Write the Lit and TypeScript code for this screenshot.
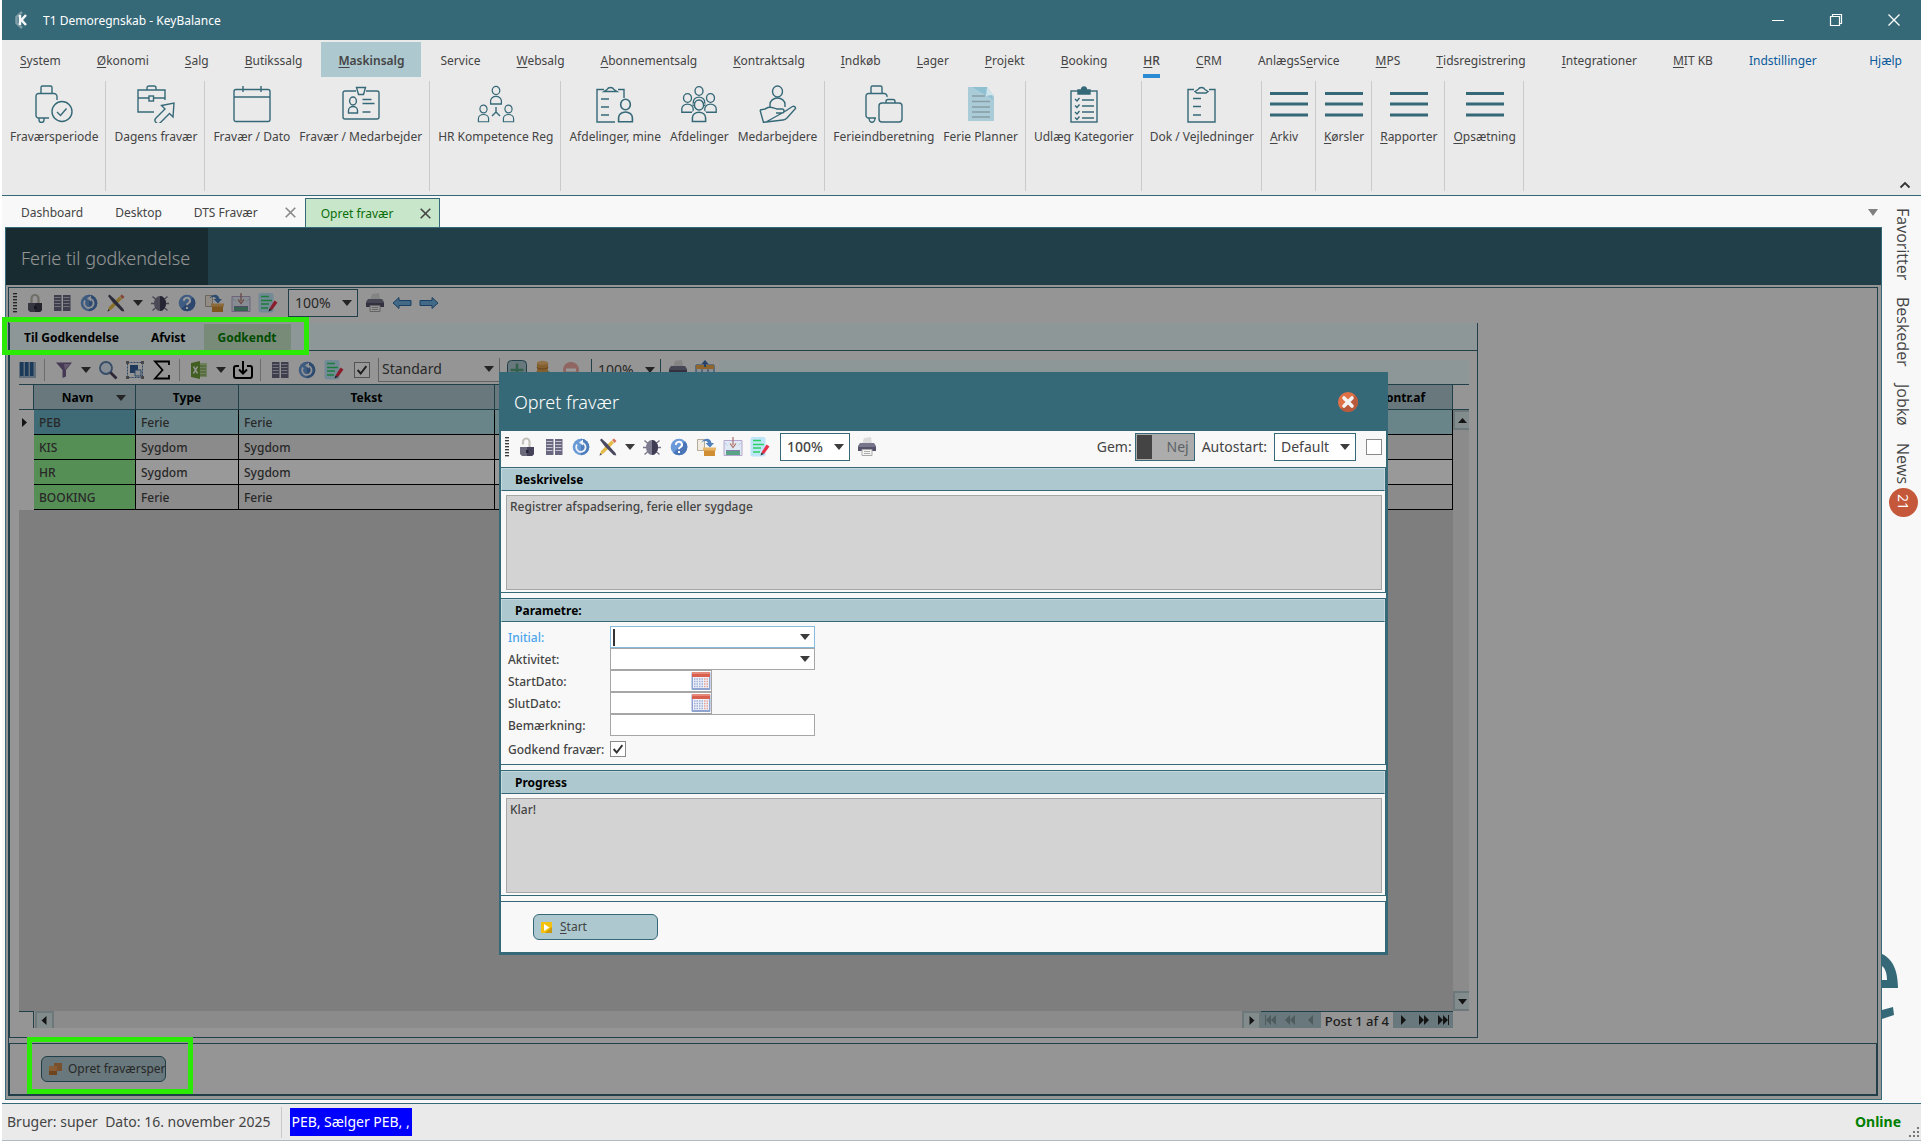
import { LitElement, html, svg, css, nothing, TemplateResult } from "lit";
import { customElement } from "lit/decorators.js";
import { classMap } from "lit/directives/class-map.js";

/** Renders a label in which the letter after "_" is the underlined access key. */
function mnemonic(text: string): TemplateResult {
  const at = text.indexOf("_");
  if (at < 0) return html`${text}`;
  return html`${text.slice(0, at)}<u>${text[at + 1]}</u>${text.slice(at + 2)}`;
}

/* ---------- ribbon icons, drawn on a 38 x 38 grid ---------- */

const person = (x: number, y: number, s = 1) => svg`
  <g transform="translate(${x} ${y}) scale(${s})">
    <ellipse cx="0" cy="0" rx="4.2" ry="4.6"></ellipse>
    <path d="M-6 15v-3.5a6 5 0 0 1 12 0V15z"></path>
  </g>`;

const ribbonIcons: Record<string, TemplateResult> = {
  period: svg`
    <path d="M6 8V2.5A1.500 1.500 0 0 1 7.500 1h8A1.500 1.500 0 0 1 17 2.500V8"></path>
    <path d="M14 33H3.500A2.500 2.500 0 0 1 1 30.500V11a2.500 2.500 0 0 1 2.500-2.500h15A3 3 0 0 1 22 11.500V15"></path>
    <path d="M4 33v2a2 2 0 0 0 5 0v-2"></path>
    <circle cx="27" cy="26.500" r="10"></circle><path d="M22 27l3.500 3.500 6-7"></path>`,
  today: svg`
    <path d="M10 5V3a2 2 0 0 1 2-2h5a2 2 0 0 1 2 2v2M17 27H1V5h27v10"></path>
    <path d="M1 13h11M17 13h11"></path><rect x="12" y="11" width="4.500" height="5"></rect>
    <path d="M37 18l-1 14-3.500-3.500-9 9a3 3 0 0 1-4.500-4.500l9-9L24.500 20.500z"></path>`,
  calendar: svg`
    <rect x="1" y="4.500" width="36" height="32" rx="2"></rect>
    <path d="M1 12h36M10 1v6M28 1v6"></path>`,
  badge: svg`
    <path d="M14 6H3a2 2 0 0 0-2 2v24a2 2 0 0 0 2 2h32a2 2 0 0 0 2-2V8a2 2 0 0 0-2-2H24"></path>
    <path d="M14.500 2.500h9l-2 7h-5z"></path><ellipse cx="11" cy="16" rx="3.400" ry="4"></ellipse>
    <path d="M6.500 28v-2.500a4.500 4 0 0 1 9 0V28zM20.500 14.500h9M20.500 18.500h12M20.500 27h8"></path>`,
  competence: svg`
    ${person(19, 5.5, 0.9)}${person(6.5, 24, 0.85)}${person(31.5, 24, 0.85)}
    <path d="M19 22v5l-4 4M19 27l4 4"></path>`,
  clipPerson: svg`
    <path d="M8 4.500H1V37h18M22 4.500h6V13"></path>
    <path d="M8 6.500l3-2a4 4 0 0 1 7 0l3 2zM5 14h8M5 22h8M5 30h8"></path>${person(29.5, 19.5, 1.15)}`,
  group: svg`
    ${person(19, 6, 0.95)}${person(7.5, 13, 0.95)}${person(30.5, 13, 0.95)}
    <path class="knock" d="M12 38V27l4-3-3-5 6-6 6 6-3 5 4 3v11z"></path>${person(19, 20, 1.1)}`,
  hand: svg`
    <ellipse cx="18.500" cy="6.500" rx="5" ry="5.500"></ellipse><path d="M11 22v-2.500a7.500 6.500 0 0 1 15 0V22"></path>
    <path d="M1 25l5-1 3-1.500c4-1 6 1 9 1.500h5a2 2 0 0 1 0 4h-6M25 27l8.500-5.500a2 2 0 0 1 3 2L28 33a6 6 0 0 1-4 2L7 37zM1 25l3.500 12.500L9 36.500"></path>`,
  luggage: svg`
    <path d="M6 8V2.500A1.500 1.500 0 0 1 7.500 1h8A1.500 1.500 0 0 1 17 2.500V8"></path>
    <path d="M11 33H3.500A2.500 2.500 0 0 1 1 30.500V11a2.500 2.500 0 0 1 2.500-2.500h15A3 3 0 0 1 22 12M4 33a2.500 3.500 0 0 0 6 0"></path>
    <rect x="14" y="18" width="23" height="19" rx="3"></rect><path d="M21 18v-1.500a2 2 0 0 1 2-2h5a2 2 0 0 1 2 2V18"></path>`,
  planner: svg`
    <path d="M6 2h19l7 9v25H6z" fill="#a9ccd8" stroke="none"></path>
    <path d="M10 2h15l7 13z" fill="#8fc0d1" stroke="none"></path><path d="M25 2l7 9-3-1-5 1z" fill="#cfe3ea" stroke="none"></path>
    <path d="M10 11h13M10 16.500h18M10 22h18M10 27h18M10 32h18" stroke="#8a9ca4"></path>`,
  checklist: svg`
    <rect x="6" y="6" width="26" height="31"></rect><path d="M13 5h3.500a2.500 3 0 0 1 5 0H25v4H13z" fill="#366978"></path>
    <path d="M10 14l2 2 2.500-3M10 20.500l2 2 2.500-3M10 27l2 2 2.500-3M10 32.500l2 2 2.500-3M17 15h12M17 21h12M17 27h12M17 33h12"></path>`,
  clipboard: svg`
    <path d="M11 4.500H5V37h27V4.500h-6"></path><path d="M12 6.500l3-2a4 4 0 0 1 7 0l3 2-2 1.500h-9zM10 13.500h8M10 21.500h8M10 30h8"></path>`,
  lines: svg`<path d="M0 8.500h38M0 19h38M0 30h38" stroke-width="3.200"></path>`,
};

interface RibbonItem { icon: string; label: string; start?: boolean; }
const ribbon: RibbonItem[][] = [
  [{ icon: "period", label: "Fraværsperiode" }],
  [{ icon: "today", label: "Dagens fravær" }],
  [{ icon: "calendar", label: "Fravær / Dato" }, { icon: "badge", label: "Fravær / Medarbejder" }],
  [{ icon: "competence", label: "HR Kompetence Reg" }],
  [{ icon: "clipPerson", label: "Afdelinger, mine" }, { icon: "group", label: "Afdelinger" }, { icon: "hand", label: "Medarbejdere" }],
  [{ icon: "luggage", label: "Ferieindberetning" }, { icon: "planner", label: "Ferie Planner" }],
  [{ icon: "checklist", label: "Udlæg Kategorier" }],
  [{ icon: "clipboard", label: "Dok / Vejledninger" }],
  [{ icon: "lines", label: "_Arkiv", start: true }],
  [{ icon: "lines", label: "_Kørsler" }],
  [{ icon: "lines", label: "_Rapporter" }],
  [{ icon: "lines", label: "_Opsætning" }],
];

const menu = ["_System", "_Økonomi", "_Salg", "_Butikssalg", "_Maskinsalg", "Service", "_Websalg", "_Abonnementsalg",
  "_Kontraktsalg", "_Indkøb", "_Lager", "_Projekt", "_Booking", "_HR", "_CRM", "AnlægsS_ervice", "_MPS",
  "_Tidsregistrering", "_Integrationer", "_MIT KB", "Indstillinger", "Hjælp"];

/* ---------- toolbar icons, drawn on a 20 x 20 grid ---------- */

const toolIcons: Record<string, TemplateResult> = {
  lock: svg`<path d="M6.500 10V5.500a3.500 3.500 0 0 1 7 0V10" fill="none" stroke="#b9b7b0" stroke-width="2.200"></path>
    <path d="M3 10h14v7l-2 2H5l-2-2z" fill="#5b5a6d"></path><path d="M10 10h7v7l-2 2h-5z" fill="#3d3c4f"></path><path d="M9 13h2.500v3H9z" fill="#25243a"></path>`,
  unlock: svg`<path d="M6 7.500V5a3.200 3.200 0 0 1 6.500-.5V10" fill="none" stroke="#c4c2ba" stroke-width="2.200"></path>
    <path d="M3 10h14v7l-2 2H5l-2-2z" fill="#6b6a7d"></path><path d="M10 10h7v7l-2 2h-5z" fill="#45445a"></path><path d="M9 13h2.500v3H9z" fill="#25243a"></path>`,
  columns: svg`<path d="M2 2h7.500v16H2zM11 2h7.500v16H11z" fill="#6a6880"></path>
    <path d="M2.500 4.500h6M2.500 7.500h6M2.500 10.500h6M2.500 13.500h6M11.500 4.500h6M11.500 7.500h6M11.500 10.500h6M11.500 13.500h6" stroke="#c4c2d0" stroke-width="1"></path>`,
  refresh: svg`<circle cx="10" cy="10" r="8.300" fill="#6a9ad6"></circle><path d="M10 1.700a8.300 8.300 0 0 1 0 16.600z" fill="#4f7cba"></path>
    <path d="M6 7.500a4.700 4.700 0 1 0 6-1.500" fill="none" stroke="#eef3fa" stroke-width="1.800"></path><path d="M12 2.500v6L8 5.500z" fill="#eef3fa"></path>`,
  tools: svg`<path d="M2 17.500l1-3.500L13.500 3.500l2.500 2.500L5.500 16.500z" fill="#e3bb4a"></path><path d="M14 3l2-1.500 2.500 2.500-2 2z" fill="#d9745b"></path><path d="M1.500 18.500l.7-2.500 1.800 1.700z" fill="#555"></path>
    <path d="M2 3l1.500-1.500L9 6.500 17.500 16l.8 2.500-2.800-.5L6.500 9z" fill="#4a4960"></path>`,
  bug: svg`<path d="M2.500 3.500l4 3.500M17.500 3.500l-4 3.500M1 10.500h18M2.500 17.500l4-3.500M17.500 17.500l-4-3.500" stroke="#77758a" stroke-width="1.300"></path>
    <ellipse cx="10" cy="10.500" rx="6" ry="7.500" fill="#7d7b90"></ellipse><path d="M10 3a6 7.500 0 0 1 0 15z" fill="#3e3c55"></path>`,
  help: svg`<circle cx="10" cy="10" r="8.300" fill="#6a9ad9"></circle><path d="M16 4.200a8.300 8.300 0 0 1-11.800 11.700z" fill="#4a76b8"></path>
    <path d="M7 7.800a3 2.800 0 1 1 4.500 2.200c-1 .6-1.500 1-1.500 2.200M10 14v2" fill="none" stroke="#fff" stroke-width="2"></path>`,
  box: svg`<path d="M1.500 2.500h7v11h-7z" fill="#f2ece0" stroke="#b3ab9a"></path><path d="M5.500 5.500C8 .5 14.500.500 15.500 6H18l-4 4.500L9.500 6H12c-1-2.500-4-2.500-6.500-.5z" fill="#4f7fbd"></path>
    <path d="M8 13h11v6H8z" fill="#d18f35"></path><path d="M7 10.500h13v3H7z" fill="#e9b566"></path>`,
  import: svg`<path d="M1 3.500h18v15H1z" fill="#dfe9f4" stroke="#b7a6cf"></path><path d="M2 6l3 3M18 6l-3 3" stroke="#9fb9dc" stroke-dasharray="1 1"></path>
    <path d="M3 14h14v4H3z" fill="#5aa486"></path><path d="M3 13.500h14" stroke="#8a7bb0"></path><path d="M10 0v8M7 6.500l3 4 3-4" fill="#f0d9d6" stroke="#a9706c" stroke-width="1.200"></path>`,
  edit: svg`<rect x=".5" y="0" width="15" height="19.500" rx="2" fill="#bfe6fa"></rect><path d="M3 3.500h8M3 7.500h11M3 11h8M3 15h7" stroke="#2ed062" stroke-width="1.700"></path>
    <path d="M11.500 15.500l5-8 3 2-5.500 7.500z" fill="#e8304a"></path><path d="M11.500 15.500l2.500 1.500-3.500 1.500z" fill="#333"></path>`,
  printer: svg`<path d="M7 1l7-1 1 7H5z" fill="#dcdcdc"></path><path d="M3 6h14l2 3v5H1V9z" fill="#77758c"></path><path d="M1 10h18v4H1z" fill="#55536a"></path>
    <path d="M5 12.500h10v6H5z" fill="#f4f4f4" stroke="#a9a9a9"></path><path d="M7 14.500h6M7 16.500h6" stroke="#9a9a9a" stroke-width=".8"></path>`,
  back: svg`<path d="M1 10l6-5.500v3h12v5H7v3z" fill="#6fb0e0" stroke="#2f6ba5"></path>`,
  forward: svg`<path d="M19 10l-6-5.500v3H1v5h12v3z" fill="#6fb0e0" stroke="#2f6ba5"></path>`,
  bars: svg`<path d="M2 2h17v16H2z" fill="#9fb7cc"></path><path d="M3 2h3.500v14H3zM8 2h3.500v14H8zM13 2h3.500v14H13z" fill="#2e5f94"></path>`,
  funnel: svg`<path d="M2 2.500h16L12 10v6.500L8.500 18v-8z" fill="#74618f"></path><path d="M10 4h6l-5 6z" fill="#a594b8"></path>`,
  search: svg`<circle cx="8" cy="8" r="6" fill="#dfeaf5" stroke="#5a7fae" stroke-width="1.800"></circle><path d="M12.500 12.500l6 6" stroke="#4c4358" stroke-width="2.800"></path>`,
  select: svg`<path d="M2.500 2.500h15v15h-15z" fill="none" stroke="#4a76a8" stroke-dasharray="2 1"></path><path d="M5 5h8v8H5z" fill="#345f9a"></path>
    <path d="M10 10h6v6h-6z" fill="#e8edf5" stroke="#4a76a8"></path><path d="M1 1h3v3H1zM16 1h3v3h-3zM1 16h3v3H1zM16 16h3v3h-3z" fill="#777"></path>`,
  sigma: svg`<path d="M17 5V1.500H3l7.500 8.500L3 18.500h14V15" fill="none" stroke="#000" stroke-width="1.800"></path>`,
  excel: svg`<path d="M9 3h9v14H9z" fill="#b9d59a"></path><path d="M11 6h6M11 9h6M11 12h6M11 15h6" stroke="#6e9c44"></path><path d="M2 3l9-2v18l-9-2z" fill="#6f9f3a"></path>
    <path d="M4.500 6.500l4 7M8.500 6.500l-4 7" stroke="#fff" stroke-width="1.500"></path>`,
  download: svg`<path d="M6 6H3a2 2 0 0 0-2 2v8a2 2 0 0 0 2 2h14a2 2 0 0 0 2-2V8a2 2 0 0 0-2-2h-3M10 1v12M6 9.500l4 4 4-4" fill="none" stroke="#000" stroke-width="2"></path>`,
  plus: svg`<rect x=".5" y=".5" width="19" height="19" rx="4" fill="#adc9cf" stroke="#366978"></rect><path d="M10 3.500v13M3.500 10h13" stroke="#57a27e" stroke-width="2.500"></path>`,
  data: svg`<path d="M3 2.500h11v14H3z" fill="#dda052"></path><ellipse cx="8.500" cy="2.800" rx="5.500" ry="2" fill="#f3bd78"></ellipse>
    <path d="M3 7a5.500 2 0 0 0 11 0M3 11.500a5.500 2 0 0 0 11 0" fill="none" stroke="#a86c2a"></path><path d="M11 13c2-2 5-2 7 0l-2 4h-4z" fill="#7db08b"></path>`,
  minus: svg`<circle cx="10" cy="10" r="8" fill="#f0aaa4"></circle><path d="M5 8.500h10v3H5z" fill="#fff"></path>`,
  sheet: svg`<path d="M1 5h18v13H1z" fill="#e6eef8" stroke="#3f6fae"></path><path d="M1 5h18v4H1z" fill="#efa94a"></path><path d="M7 9v9M13 9v9M1 13h18" stroke="#3f6fae"></path><path d="M10 0l3.500 4H11v3H9V4H6.500z" fill="#3f6fae"></path>`,
};

const icon = (name: string) => html`<svg class="tool" viewBox="0 0 20 20" aria-hidden="true">${toolIcons[name]}</svg>`;
const caret = html`<svg class="caret" viewBox="0 0 10 6" aria-hidden="true"><path d="M0 0h10L5 6z" fill="#3c3c3c"></path></svg>`;
const tick = html`<svg class="tick" viewBox="0 0 16 16" aria-hidden="true"><path d="M3 8l3.500 4L13 3.500" fill="none" stroke="#333" stroke-width="2.200"></path></svg>`;

const shared = css`
  *, *::before, *::after { box-sizing: border-box; }
  button, input, select, textarea { font: inherit; color: inherit; margin: 0; padding: 0; border: 0; background: none; border-radius: 0; outline: none; }
  button { display: inline-flex; align-items: center; justify-content: center; }
  svg { display: block; flex: none; }
  u { text-underline-offset: 2px; }
  .tool { width: 20px; height: 20px; }
  .caret { width: 10px; height: 6px; }
  .combo { display: grid; align-items: center; height: 28px; border: 1px solid #366978; background: #fff; font-size: 14px; color: #444; }
  .combo > * { grid-area: 1 / 1; }
  .combo select { appearance: none; width: 100%; height: 100%; padding-left: 6px; }
  .combo .caret { justify-self: end; margin-right: 5px; pointer-events: none; }
  .check { display: grid; width: 16px; height: 16px; border: 1px solid #8a8a8a; background: #fff; }
  .check > * { grid-area: 1 / 1; }
  .check input { appearance: none; width: 14px; height: 14px; }
  .check .tick { width: 14px; height: 14px; pointer-events: none; }
`;

/** The row of general tools that every form window carries. */
@customElement("form-tools")
class FormTools extends LitElement {
  static properties = { dialog: { type: Boolean } };
  declare dialog: boolean;
  static styles = [shared, css`
    :host { display: flex; align-items: center; gap: 7px; }
    .grip { width: 4px; height: 20px; margin-right: 1px; background: repeating-linear-gradient(#3c3c3c 0 1px, #b4b4b4 1px 2px, transparent 2px 3px); }
    .zoom { width: 70px; margin-left: 3px; }
  `];
  render() {
    const names = [this.dialog ? "unlock" : "lock", "columns", "refresh", "tools", "caret", "bug", "help", "box", "import", "edit"];
    return html`
      <span class="grip"></span>
      ${names.map((n) => html`<button type="button" aria-label=${n}>${n === "caret" ? caret : icon(n)}</button>`)}
      <span class="combo zoom"><select aria-label="Zoom"><option>100%</option></select>${caret}</span>
      <button type="button" aria-label="print">${icon("printer")}</button>
      ${this.dialog ? nothing : html`<button type="button" aria-label="back">${icon("back")}</button>
        <button type="button" aria-label="forward">${icon("forward")}</button>`}`;
  }
}

/** The dialog in which an absence is registered. */
@customElement("absence-dialog")
class AbsenceDialog extends LitElement {
  static styles = [shared, css`
    :host { display: flex; flex-direction: column; background: #f8f8f8; border: solid #366978; border-width: 0 2px 3px; font-size: 12px; font-weight: 500; color: #444; }
    header { display: flex; align-items: center; justify-content: space-between; height: 59px; padding: 0 28px 0 13px; background: #366978; color: #fff; }
    h2 { margin: 0; font-size: 18px; font-weight: 300; }
    .close svg { width: 20px; height: 20px; }
    .bar { display: flex; justify-content: space-between; align-items: flex-start; height: 36px; padding: 1px 4px 0; }
    .bar form-tools { height: 30px; }
    .options { display: flex; align-items: center; height: 30px; gap: 7px; font-size: 14px; font-weight: 400; }
    .toggle { width: 60px; height: 28px; margin-left: -4px; padding: 0 5px 0 1px; border: 1px solid #366978; background: #acacac; color: #5c6266; justify-content: space-between; }
    .toggle i { width: 15px; height: 24px; background: #444; }
    .auto { width: 82px; }
    .options .check { margin-left: 3px; }
    section { border: solid #366978; border-width: 1px 1px 1px 0; margin-bottom: 5px; }
    section:last-child { margin-bottom: 0; border-bottom: 0; }
    h3 { margin: 0; height: 23px; line-height: 21px; padding-left: 13px; border: 1px solid #c4d9dd; border-bottom-color: #366978; background: #adc9cf; color: #000; font-size: 12px; font-weight: 700; }
    .memo { display: block; width: calc(100% - 8px); height: 95px; margin: 4px 3px 2px 5px; padding: 2px 3px; resize: none; border: 1px solid #a6a6a6; background: #d3d3d3; line-height: 18px; font-weight: 500; }
    .fields { display: grid; grid-template-columns: 102px 205px; justify-content: start; padding: 4px 7px 0; }
    .fields label { line-height: 23px; height: 22px; }
    .fields .active { color: #4aa5ee; }
    .field { display: flex; align-items: center; height: 22px; border: 1px solid #a6a6a6; background: #fff; }
    .field.focus { border-color: #86bbdc; }
    .field.focus::before { content: ""; width: 2px; height: 17px; margin-left: 2px; background: #333; }
    .field input { flex: 1; min-width: 0; height: 100%; padding: 0 3px; }
    .field .caret { margin-right: 4px; }
    .field.date { width: 102px; }
    .field.date svg { width: 20px; height: 20px; }
    .fields .tall { line-height: 28px; height: 28px; }
    .fields .check { margin-top: 5px; }
    .actions { height: 51px; padding: 12px 32px; }
    .start { width: 125px; height: 26px; justify-content: flex-start; gap: 8px; padding-left: 7px; border: 1px solid #366978; border-radius: 6px; background: #adc9cf; font-weight: 400; }
    .start svg { width: 11px; height: 11px; }
  `];
  private calendar = html`<svg viewBox="0 0 20 20" aria-hidden="true"><rect x=".5" y="1" width="19" height="18" rx="1" fill="#8fa3cf"></rect>
    <path d="M1 1h18v5H1z" fill="#d9604e"></path><path d="M1 1h18v2H1z" fill="#e58a7a"></path><path d="M2 6h16v11H2z" fill="#eef1f9"></path>
    <path d="M3 8h10M3 10.500h10M3 13h10M3 15.500h10" stroke="#9daed6" stroke-width="1.500" stroke-dasharray="1.500 1"></path>
    <path d="M13 8h4M13 10.500h4M13 13h4M13 15.500h4" stroke="#e3a297" stroke-width="1.500" stroke-dasharray="1.500 1"></path></svg>`;
  render() {
    return html`
      <header>
        <h2>Opret fravær</h2>
        <button class="close" type="button" aria-label="Luk"><svg viewBox="0 0 20 20"><circle cx="10" cy="10" r="10" fill="#e07046"></circle>
          <path d="M17.100 2.900A10 10 0 0 1 2.900 17.100z" fill="#b95a3c"></path><path d="M6 6l8 8M14 6l-8 8" stroke="#f3f3f3" stroke-width="3.600" stroke-linecap="round"></path></svg></button>
      </header>
      <div class="bar">
        <form-tools dialog></form-tools>
        <div class="options">
          <span id="gem">Gem:</span>
          <button class="toggle" type="button" role="switch" aria-checked="false" aria-labelledby="gem"><i></i>Nej</button>
          <label for="auto">Autostart:</label>
          <span class="combo auto"><select id="auto"><option>Default</option></select>${caret}</span>
          <span class="check"><input type="checkbox" aria-label="Autostart" /></span>
        </div>
      </div>
      <section><h3>Beskrivelse</h3><textarea class="memo" readonly aria-label="Beskrivelse" .value=${"Registrer afspadsering, ferie eller sygdage"}></textarea></section>
      <section>
        <h3>Parametre:</h3>
        <div class="fields">
          <label class="active" for="initial">Initial:</label><span class="field focus"><input id="initial" role="combobox" aria-expanded="false" />${caret}</span>
          <label for="activity">Aktivitet:</label><span class="field"><input id="activity" role="combobox" aria-expanded="false" />${caret}</span>
          <label for="from">StartDato:</label><span class="field date"><input id="from" />${this.calendar}</span>
          <label for="to">SlutDato:</label><span class="field date"><input id="to" />${this.calendar}</span>
          <label for="note">Bemærkning:</label><span class="field"><input id="note" /></span>
          <label class="tall" for="approve">Godkend fravær:</label><span class="check"><input id="approve" type="checkbox" checked />${tick}</span>
        </div>
      </section>
      <section><h3>Progress</h3><textarea class="memo" readonly aria-label="Progress" .value=${"Klar!"}></textarea></section>
      <section class="actions">
        <button class="start" type="button"><svg viewBox="0 0 11 11"><path d="M0 0h11v11H0z" fill="#f4c20d"></path><path d="M11 5v6H4z" fill="#c99a10"></path><path d="M3 2l5.500 3.500L3 9z" fill="#fff"></path></svg><span>${mnemonic("_Start")}</span></button>
      </section>`;
  }
}

interface Row { name: string; kind: string; text: string; }
const rows: Row[] = [
  { name: "PEB", kind: "Ferie", text: "Ferie" },
  { name: "KIS", kind: "Sygdom", text: "Sygdom" },
  { name: "HR", kind: "Sygdom", text: "Sygdom" },
  { name: "BOOKING", kind: "Ferie", text: "Ferie" },
];

/** The grid of approved absences with its scroll bars and record navigator. */
@customElement("absence-grid")
class AbsenceGrid extends LitElement {
  static styles = [shared, css`
    :host { display: grid; grid-template-columns: minmax(0, 1fr) 16px; grid-template-rows: minmax(0, 1fr) 17px; font-size: 12px; font-weight: 500; color: #444; }
    .sheet { background: #d3d3d3; overflow: hidden; }
    table { width: 100%; border-collapse: separate; border-spacing: 0; table-layout: fixed; }
    th, td { height: 25px; padding: 2px 5px 0; text-align: left; border-right: 1px solid #000; border-bottom: 1px solid #000; white-space: nowrap; overflow: hidden; }
    th { height: 26px; border-color: #366978; border-top: 1px solid #366978; background: #adc9cf; color: #000; font-weight: 700; text-align: center; }
    .mark { width: 15px; padding: 0; background: #f8f8f8; border-bottom-color: #f8f8f8; border-right-color: #f8f8f8; }
    th.mark { border-right-color: #366978; border-bottom-color: #366978; }
    .mark svg { width: 5px; height: 9px; margin-left: 3px; }
    .name { width: 102px; }
    .kind { width: 103px; }
    .text { width: 256px; }
    .by { width: 102px; }
    .sort { display: grid; grid-template-columns: 1fr 10px; align-items: center; padding: 0 4px 0 0; }
    td { background: #e8e8e8; }
    tr:nth-child(odd) td { background: #fff; }
    tr:first-child td { background: #b1dee4; }
    tbody td.name { background: #90ee90; }
    tbody tr:first-child td.name { background: #69b2c5; }
    tbody tr td.mark { background: #f8f8f8; }
    .vertical { display: flex; flex-direction: column; background: #e8e8e8; }
    .corner { height: 26px; border-top: 1px solid #366978; border-bottom: 1px solid #366978; background: #f8f8f8; }
    .arrow { width: 16px; height: 20px; border: 2px solid #b4c8cc; border-right: 0; background: #dbe9ec; }
    .vertical .arrow + span { flex: 1; }
    .arrow svg { width: 9px; height: 9px; }
    .horizontal { display: flex; background: #e8e8e8; }
    .horizontal .arrow { width: 19px; height: 17px; margin-left: 1px; border: 2px solid #b4c8cc; border-bottom: 0; }
    .horizontal .start { width: 15px; border: solid #366978; border-width: 1px 1px 0 0; background: #f8f8f8; }
    .track { flex: 1; }
    .records { display: flex; align-items: stretch; border-top: 1px solid #366978; background: #adc9cf; font-size: 13px; }
    .records button { width: 20px; }
    .records svg { width: 13px; height: 10px; }
    .records output { padding: 0 4px; background: #f8f8f8; line-height: 18px; color: #333; height: 16px; }
    .dim { opacity: .3; }
  `];
  private jump(path: string, dim = false, label = "") {
    return html`<button type="button" class=${classMap({ dim })} aria-label=${label}><svg viewBox="0 0 13 10"><path d=${path} fill="#222"></path></svg></button>`;
  }
  render() {
    return html`
      <div class="sheet">
        <table>
          <thead><tr><th class="mark"></th><th class="name"><span class="sort"><span>Navn</span>${caret}</span></th><th class="kind">Type</th><th class="text">Tekst</th><th></th><th class="by">Kontr.af</th></tr></thead>
          <tbody>
            ${rows.map((r, i) => html`<tr>
              <td class="mark">${i ? nothing : html`<svg viewBox="0 0 5 9"><path d="M0 0l5 4.500L0 9z" fill="#222"></path></svg>`}</td>
              <td class="name">${r.name}</td><td>${r.kind}</td><td>${r.text}</td><td></td><td></td></tr>`)}
          </tbody>
        </table>
      </div>
      <div class="vertical">
        <span class="corner"></span>
        <button class="arrow" type="button" aria-label="Op"><svg viewBox="0 0 9 9"><path d="M0 7l4.500-5L9 7z" fill="#222"></path></svg></button>
        <span></span>
        <button class="arrow" type="button" aria-label="Ned"><svg viewBox="0 0 9 9"><path d="M0 2h9L4.500 7.500z" fill="#222"></path></svg></button>
      </div>
      <div class="horizontal">
        <span class="start"></span>
        <button class="arrow" type="button" aria-label="Venstre"><svg viewBox="0 0 9 9"><path d="M6.500 0v9L1.500 4.500z" fill="#222"></path></svg></button>
        <span class="track"></span>
        <button class="arrow" type="button" aria-label="Højre"><svg viewBox="0 0 9 9"><path d="M2.500 0v9l5-4.500z" fill="#222"></path></svg></button>
        <div class="records">
          ${this.jump("M1 0h1v10H1zM7 0v10L2 5zM12 0v10L7 5z", true, "Første")}
          ${this.jump("M6 0v10L1 5zM11 0v10L6 5z", true, "Forrige side")}
          ${this.jump("M9 0v10L4 5z", true, "Forrige")}
          <output>Post 1 af 4</output>
          ${this.jump("M4 0v10l5-5z", false, "Næste")}
          ${this.jump("M2 0v10l5-5zM7 0v10l5-5z", false, "Næste side")}
          ${this.jump("M1 0v10l5-5zM6 0v10l5-5zM11 0h1v10h-1z", false, "Sidste")}
        </div>
      </div>`;
  }
}

@customElement("app-root")
class AppRoot extends LitElement {
  static styles = [shared, css`
    :host { display: flex; flex-direction: column; height: 100vh; padding-left: 2px; overflow: hidden; background: #fff; color: #444; font: 12px/16px "Noto Sans", "Open Sans", sans-serif; }
    .title { display: flex; align-items: center; height: 40px; padding: 0 20px 0 12px; background: #366978; color: #fff; }
    .title h1 { flex: 1; margin: 0 0 0 13px; padding-top: 2px; font-size: 12px; font-weight: 400; }
    .title .logo { width: 16px; height: 18px; }
    .windows { display: flex; gap: 44px; }
    .windows svg { width: 14px; height: 14px; }
    .menu { display: flex; gap: 2px; height: 41px; padding: 2px 2px 4px 1px; background: #eaeaea; }
    .menu a { display: flex; align-items: center; padding: 2px 17px 0; color: #444; text-decoration: none; white-space: nowrap; }
    .menu .marked { background: #adc9cf; font-weight: 600; }
    .menu .current { font-weight: 500; }
    .menu .current span { position: relative; }
    .menu .current span::after { content: ""; position: absolute; left: 0; right: 0; bottom: -9px; height: 4px; background: #2b8ad4; }
    .menu .link { color: #0a5a9c; }
    .menu .link:last-child { margin-left: auto; }
    .ribbon { display: flex; height: 115px; padding-bottom: 4px; border-bottom: 1px solid #366978; background: #eaeaea; }
    .group { display: flex; gap: 9px; padding: 4px 7px 0 8px; border-right: 1px solid #cacaca; }
    .group button { flex-direction: column; justify-content: flex-start; gap: 6px; white-space: nowrap; }
    .group .lead { align-items: flex-start; }
    .group svg { width: 38px; height: 38px; fill: none; stroke: #366978; stroke-width: 1.400; }
    .group .knock { fill: #eaeaea; stroke: none; }
    .fold { align-self: flex-end; margin: 0 10px 2px auto; }
    .fold svg { width: 12px; height: 8px; }
    .work { flex: 1; min-height: 0; display: grid; grid-template-columns: minmax(0, 1fr) 39px; grid-template-rows: 31px minmax(0, 1fr); padding: 0 0 3px 3px; background: #f8f8f8; }
    .tabs { display: flex; align-items: center; padding-top: 2px; }
    .tabs button { height: 29px; padding: 0 16px; }
    .tabs svg { width: 11px; height: 11px; margin-left: 27px; color: #888; }
    .tabs .closable { padding-right: 9px; }
    .tabs .open { height: 30px; margin-bottom: -1px; padding: 0 8px 0 15px; border: 1px solid #366978; border-bottom: 0; background: #c8e6c9; color: #0a6e0a; }
    .tabs .open svg { color: #444; }
    .tabs .more { margin-left: auto; padding: 0 4px 0 0; }
    .tabs .more svg { width: 10px; height: 7px; margin: 0; }
    .side { grid-row: 1 / 3; grid-column: 2; display: flex; flex-direction: column; align-items: center; position: relative; padding: 12px 0 0 3px; overflow: hidden; font-family: "Open Sans", sans-serif; font-size: 16px; line-height: 20px; }
    .side button { writing-mode: vertical-rl; margin-bottom: 17px; }
    .side .last { margin-bottom: 4px; }
    .side .count { writing-mode: vertical-rl; display: grid; place-items: center; width: 29px; height: 29px; border-radius: 50%; background: #c5583a; color: #fff; font-size: 14px; }
    .side .brand { position: absolute; left: 0; bottom: 79px; width: 18px; height: 68px; }
    .pane { position: relative; display: flex; flex-direction: column; border: 1px solid #366978; background: #f8f8f8; min-height: 0; }
    .head { display: flex; height: 57px; background: #366978; }
    .head h2 { display: flex; align-items: center; width: 202px; margin: 0; padding: 2px 0 0 15px; background: #284852; color: #f8f8f8; font-size: 18px; font-weight: 300; white-space: nowrap; }
    .frame { flex: 1; min-height: 0; display: flex; flex-direction: column; margin: 2px 3px 3px 2px; border: solid #366978; border-width: 1px 1px 0 1px; }
    .frame > form-tools { height: 35px; padding: 0 0 5px 4px; }
    .views { position: relative; display: flex; align-items: center; height: 28px; max-width: 1469px; border: solid #366978; border-width: 0 1px 1px; background: #edfcfc; color: #000; font-weight: 700; font-size: 12px; }
    .views button { height: 26px; padding: 2px 18px 0 14px; }
    .views .chosen { padding-right: 14px; background: #c8e6c9; color: #008000; }
    .panel { flex: 1; min-height: 0; display: flex; flex-direction: column; max-width: 1469px; padding: 0 8px 9px 9px; border: solid #366978; border-width: 0 1px 1px; }
    .panel absence-grid { flex: 1; min-height: 0; }
    .strip { display: flex; align-items: center; gap: 7px; height: 33px; padding-top: 4px; }
    .strip button:first-child { margin-left: -2px; }
    .rule { width: 3px; height: 22px; border-left: 1px solid #b5b5b5; }
    .strip .standard { width: 122px; height: 24px; border-color: #a6a6a6; border-top: 0; background: #f8f8f8; }
    .strip .standard select { padding-left: 3px; }
    .strip .zoom { width: 70px; height: 22px; margin-left: 3px; border-top: 0; border-bottom: 0; background: #f8f8f8; }
    .strip .check { margin: 0 1px 0 3px; }
    .rest { flex: 1; align-self: stretch; margin: 5px 0 0 -3px; background: #edfcfc; }
    .foot { position: relative; margin-top: 5px; height: 53px; padding: 12px 31px; border: 1px solid #366978; border-bottom-width: 2px; }
    .create { width: 125px; height: 26px; justify-content: flex-start; gap: 6px; padding-left: 7px; overflow: hidden; border: 1px solid #366978; border-radius: 6px; background: #adc9cf; white-space: nowrap; }
    .create svg { width: 13px; height: 13px; }
    .ring { position: absolute; z-index: 3; border: 5px solid #2bea05; pointer-events: none; }
    .ring.top { left: -8px; top: -6px; width: 307px; height: 38px; }
    .ring.low { left: 17px; top: -7px; width: 166px; height: 57px; }
    .veil { position: absolute; inset: 0; z-index: 2; display: grid; place-items: center; background: rgba(0, 0, 0, .4); }
    .veil absence-dialog { width: min(889px, 96%); }
    .status { display: flex; align-items: center; height: 38px; border-top: 1px solid #366978; border-bottom: 1px solid #aebcbf; background: #eaeaea; font-size: 14px; }
    .status .text { padding: 0 11px 0 5px; white-space: pre; }
    .status .user { margin-left: 8px; padding: 4px 2px 4px 1px; line-height: 20px; background: #0000ff; color: #fff; }
    .status .bar { width: 1px; height: 31px; background: #cacaca; }
    .status .online { margin-left: auto; color: #008000; font-weight: 700; }
    .status svg { width: 10px; height: 10px; align-self: flex-end; margin: 0 2px 3px 8px; }
  `];
  private cross = html`<svg viewBox="0 0 11 11" aria-hidden="true"><path d="M.7 .7l9.600 9.600M10.300 .7L.7 10.300" stroke="currentColor" stroke-width="1.600"></path></svg>`;
  private tools(names: string[]) {
    return names.map((n) => n === "|" ? html`<span class="rule"></span>`
      : html`<button type="button" aria-label=${n}>${n === "caret" ? caret : icon(n)}</button>`);
  }
  render() {
    return html`
      <header class="title">
        <svg class="logo" viewBox="0 0 16 18" aria-hidden="true"><path d="M8 1L2.500 6v6L8 17" fill="none" stroke="#7f9ea8" stroke-width="2.500"></path><path d="M6 4v10M12 4L7.500 9l4.500 5" fill="none" stroke="#f4f7f8" stroke-width="2.500"></path></svg>
        <h1>T1 Demoregnskab - KeyBalance</h1>
        <div class="windows">
          <button type="button" aria-label="Minimer"><svg viewBox="0 0 14 14"><path d="M1 7.500h12" stroke="#fff"></path></svg></button>
          <button type="button" aria-label="Gendan"><svg viewBox="0 0 14 14"><path d="M1.500 3.500h9v9h-9zM3.500 3V1.500h9v9H11" fill="none" stroke="#fff" stroke-width="1.200"></path></svg></button>
          <button type="button" aria-label="Luk"><svg viewBox="0 0 14 14"><path d="M1.500 1.500l11 11M12.500 1.500l-11 11" stroke="#fff" stroke-width="1.300"></path></svg></button>
        </div>
      </header>
      <nav class="menu">
        ${menu.map((m, i) => html`<a href="#" class=${classMap({ marked: m === "_Maskinsalg", current: m === "_HR", link: i >= menu.length - 2 })}><span>${mnemonic(m)}</span></a>`)}
      </nav>
      <div class="ribbon">
        ${ribbon.map((g) => html`<div class="group">${g.map((it) => html`<button type="button" class=${classMap({ lead: !!it.start })}><svg viewBox="0 0 38 38" aria-hidden="true">${ribbonIcons[it.icon]}</svg><span>${mnemonic(it.label)}</span></button>`)}</div>`)}
        <button class="fold" type="button" aria-label="Fold sammen"><svg viewBox="0 0 12 8"><path d="M1.500 6.500L6 2l4.500 4.500" fill="none" stroke="#333" stroke-width="1.800"></path></svg></button>
      </div>
      <main class="work">
        <nav class="tabs">
          <button type="button">Dashboard</button><button type="button">Desktop</button>
          <button class="closable" type="button">DTS Fravær${this.cross}</button>
          <button class="open" type="button">Opret fravær${this.cross}</button>
          <button class="more" type="button" aria-label="Flere faner"><svg viewBox="0 0 10 7"><path d="M0 0h10L5 7z" fill="#808080"></path></svg></button>
        </nav>
        <aside class="side">
          <button type="button">Favoritter</button><button type="button">Beskeder</button><button type="button">Jobkø</button>
          <button class="last" type="button">News</button><span class="count">21</span>
          <svg class="brand" viewBox="0 0 18 68" aria-hidden="true"><path d="M0 1C9 5 16 15 16 35H0V27h5C5 20 3 15 0 13zM0 57l11-3 1 8-12 4z" fill="#366978"></path></svg>
        </aside>
        <div class="pane">
          <div class="head"><h2>Ferie til godkendelse</h2></div>
          <div class="frame">
            <form-tools></form-tools>
            <nav class="views">
              <button type="button">Til Godkendelse</button><button type="button">Afvist</button><button class="chosen" type="button">Godkendt</button>
              <span class="ring top"></span>
            </nav>
            <div class="panel">
              <div class="strip">
                ${this.tools(["bars", "|", "funnel", "caret", "search", "select", "sigma", "|", "excel", "caret", "download", "|", "columns", "refresh", "edit"])}
                <span class="check"><input type="checkbox" aria-label="Vis" checked />${tick}</span>
                <span class="combo standard"><select aria-label="Layout"><option>Standard</option></select>${caret}</span>
                ${this.tools(["plus", "data", "minus"])}
                <span class="combo zoom"><select aria-label="Zoom"><option>100%</option></select>${caret}</span>
                ${this.tools(["printer", "sheet"])}
                <span class="rest"></span>
              </div>
              <absence-grid></absence-grid>
            </div>
            <div class="foot">
              <button class="create" type="button"><svg viewBox="0 0 13 13"><path d="M5 0h8v8H5z" fill="#c9854a"></path><path d="M0 3h8v9H0z" fill="#e09a5a"></path><path d="M0 8h8v4H0z" fill="#b9702f"></path></svg><span>Opret fraværsperiode</span></button>
              <span class="ring low"></span>
            </div>
          </div>
          <div class="veil"><absence-dialog></absence-dialog></div>
        </div>
      </main>
      <footer class="status">
        <span class="text">Bruger: super  Dato: 16. november 2025</span><span class="bar"></span>
        <span class="user">PEB, Sælger PEB, ,</span>
        <span class="online">Online</span>
        <svg viewBox="0 0 10 10" aria-hidden="true"><path d="M8 0h2v2H8zM4 4h2v2H4zM8 4h2v2H8zM0 8h2v2H0zM4 8h2v2H4zM8 8h2v2H8z" fill="#777"></path></svg>
      </footer>`;
  }
}
